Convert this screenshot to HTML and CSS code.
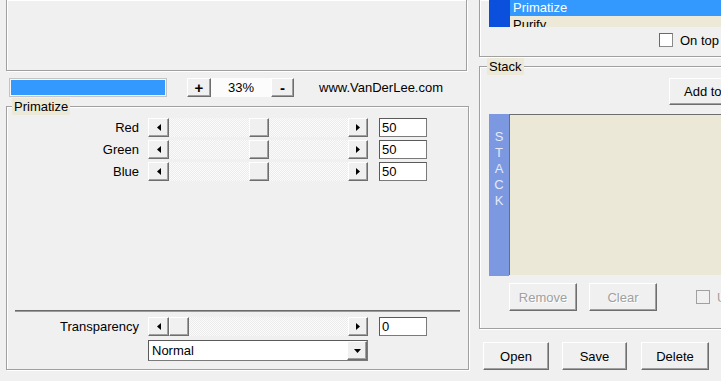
FILE: index.html
```html
<!DOCTYPE html>
<html>
  <head>
      <meta charset="utf-8">
      <title>Primatize</title>
      <link rel="stylesheet" href="styles.css">
  </head>
  <body>
      <div id="left">
          <div class="preview"></div>
          <div class="toolbar">
            <div class="progress"><div class="progress-fill"></div></div>
            <div class="btn zoom-btn plus">+</div>
            <div class="zoom-val">33%</div>
            <div class="btn zoom-btn">-</div>
            <div class="site">www.VanDerLee.com</div>
          </div>
          <fieldset class="group params">
            <legend>Primatize</legend>
            <div class="params-body">
              <div class="row">
                <div class="label">Red</div>
                <div class="slider">
                  <div class="btn arrow arrow-l"><svg width="4" height="7"><polygon points="4,0 4,7 0,3.5" fill="#000"/></svg></div>
                  <div class="track"><div class="btn thumb" style="margin-left:80px"></div></div>
                  <div class="btn arrow"><svg width="4" height="7"><polygon points="0,0 0,7 4,3.5" fill="#000"/></svg></div>
                </div>
                <div class="edit">50</div>
              </div>
              <div class="row">
                <div class="label">Green</div>
                <div class="slider">
                  <div class="btn arrow arrow-l"><svg width="4" height="7"><polygon points="4,0 4,7 0,3.5" fill="#000"/></svg></div>
                  <div class="track"><div class="btn thumb" style="margin-left:80px"></div></div>
                  <div class="btn arrow"><svg width="4" height="7"><polygon points="0,0 0,7 4,3.5" fill="#000"/></svg></div>
                </div>
                <div class="edit">50</div>
              </div>
              <div class="row">
                <div class="label">Blue</div>
                <div class="slider">
                  <div class="btn arrow arrow-l"><svg width="4" height="7"><polygon points="4,0 4,7 0,3.5" fill="#000"/></svg></div>
                  <div class="track"><div class="btn thumb" style="margin-left:80px"></div></div>
                  <div class="btn arrow"><svg width="4" height="7"><polygon points="0,0 0,7 4,3.5" fill="#000"/></svg></div>
                </div>
                <div class="edit">50</div>
              </div>

              <div class="separator"></div>

              <div class="row trans">
                <div class="label">Transparency</div>
                <div class="slider">
                  <div class="btn arrow arrow-l"><svg width="4" height="7"><polygon points="4,0 4,7 0,3.5" fill="#000"/></svg></div>
                  <div class="track"><div class="btn thumb" style="margin-left:0px"></div></div>
                  <div class="btn arrow"><svg width="4" height="7"><polygon points="0,0 0,7 4,3.5" fill="#000"/></svg></div>
                </div>
                <div class="edit">0</div>
              </div>
              <div class="row mode">
                <div class="label"></div>
                <div class="combo">
                  <div class="combo-text">Normal</div>
                  <div class="btn combo-btn"><svg width="7" height="4"><polygon points="0,0 7,0 3.5,4" fill="#000"/></svg></div>
                </div>
              </div>
            </div>
          </fieldset>
      </div>

      <div id="right">
          <div class="filters">
            <div class="list">
              <div class="list-strip"></div>
              <div class="list-items">
                <div class="item on">Primatize</div>
                <div class="item">Purify</div>
              </div>
            </div>
            <div class="check-row ontop"><span class="check"></span>On top</div>
          </div>

          <fieldset class="group stack">
            <legend>Stack</legend>
            <div class="btn add-btn">Add to stack</div>
            <div class="stack-box">
              <div class="stack-strip">S<br>T<br>A<br>C<br>K</div>
              <div class="stack-list"></div>
            </div>
            <div class="stack-actions">
              <div class="btn big-btn disabled remove">Remove</div>
              <div class="btn big-btn disabled clear">Clear</div>
              <div class="check-row disabled use"><span class="check"></span>Use</div>
            </div>
          </fieldset>

          <div class="bottom-btns">
            <div class="btn big-btn open">Open</div>
            <div class="btn big-btn save">Save</div>
            <div class="btn big-btn delete">Delete</div>
          </div>
      </div>
  </body>
</html>
```

FILE: styles.css
```css
*{
  margin:0;
  padding:0;
  box-sizing:border-box;
}
body{
  width:721px;
  height:381px;
  overflow:hidden;
  display:flex;
  background:#f0f0f0;
  font-family:"Liberation Sans", Arial, sans-serif;
  font-size:13px;
  color:#000;
}
#left{
  width:463px;
  margin-left:6px;
  flex-shrink:0;
}
#right{
  width:300px;
  margin-left:10px;
  flex-shrink:0;
}

/* etched frames */
.preview,
.filters,
.group{
  border:1px solid #a0a0a0;
  box-shadow:inset 1px 1px 0 #fff, 1px 1px 0 #fff;
}
.preview{
  width:461px;
  height:71px;
  border-top:none;
}

/* 3d buttons */
.btn{
  background:#f0f0f0;
  border:1px solid;
  border-color:#fff #6e6e6e #6e6e6e #fff;
  box-shadow:inset -1px -1px 0 #a0a0a0;
  display:flex;
  align-items:center;
  justify-content:center;
  flex-shrink:0;
}
.disabled{
  color:#a0a0a0;
  text-shadow:1px 1px 0 #fff;
}

.toolbar{
  display:flex;
  align-items:center;
  height:19px;
  margin-top:7px;
}
.progress{
  width:158px;
  height:19px;
  margin-left:3px;
  border:1px solid #c4c4c4;
  padding:1px;
  background:#f8f8f8;
}
.progress-fill{
  width:100%;
  height:100%;
  background:#3399ff;
}
.zoom-btn{
  width:23px;
  height:19px;
  font-weight:bold;
  font-size:15px;
  line-height:1;
}
.plus{
  width:24px;
  margin-left:20px;
}
.zoom-val{
  width:60px;
  height:19px;
  line-height:19px;
  text-align:center;
  background:#fcfcfc;
}
.site{
  margin-left:25px;
}

fieldset.group{
  margin-top:1px;
}
.group legend{
  background:#ece9d8;
  line-height:17px;
  padding:0 2px;
  margin-left:5px;
}
.params-body{
  height:254px;
  padding:3px 0 8px;
  display:flex;
  flex-direction:column;
}
.row{
  display:flex;
  align-items:center;
  height:19px;
  margin-bottom:3px;
}
.label{
  width:132px;
  margin-right:9px;
  text-align:right;
}
.slider{
  display:flex;
  width:220px;
  height:19px;
}
.arrow{
  width:20px;
  height:19px;
}
.arrow-l{
  width:21px;
}
.track{
  flex:1;
  display:flex;
  background:repeating-conic-gradient(#fbfbfb 0 25%, #ececec 0 50%) 0 0/2px 2px;
}
.thumb{
  width:20px;
  height:19px;
}
.edit{
  width:48px;
  height:19px;
  margin-left:11px;
  background:#fff;
  border:1px solid #7a7a7a;
  border-top-color:#5a5a5a;
  border-left-color:#5a5a5a;
  padding-left:2px;
  line-height:17px;
}
.separator{
  margin:auto 8px 5px;
  height:2px;
  border-top:1px solid #6a6a6a;
  border-bottom:1px solid #9a9a9a;
}
.trans{
  margin-bottom:4px;
}
.mode{
  height:21px;
  margin-bottom:0;
}
.combo{
  display:flex;
  width:220px;
  height:21px;
  background:#fff;
  border:1px solid #7a7a7a;
  border-top-color:#5a5a5a;
  border-left-color:#5a5a5a;
}
.combo-text{
  flex:1;
  padding-left:3px;
  line-height:19px;
}
.combo-btn{
  width:20px;
  height:19px;
}

/* right column */
.filters{
  border-top:none;
  border-right:none;
  padding:0 0 9px 9px;
}
.list{
  display:flex;
  height:27px;
  overflow:hidden;
  background:#ece9d8;
}
.list-strip{
  width:21px;
  background:#0a50dc;
}
.list-items{
  flex:1;
}
.item{
  height:17px;
  line-height:16px;
  padding-left:3px;
}
.item.on{
  background:#3399ff;
  color:#fff;
  height:16px;
  margin-bottom:1px;
}
.check-row{
  display:flex;
  align-items:center;
  height:14px;
}
.ontop{
  margin:6px 0 0 170px;
}
.check{
  width:14px;
  height:14px;
  margin-right:7px;
  background:#fff;
  border:1px solid #8a8a8a;
  border-top-color:#6a6a6a;
  border-left-color:#6a6a6a;
}
.disabled .check{
  background:#f0f0f0;
  border-color:#a0a0a0;
}

.stack{
  border-right:none;
  height:271px;
  padding-top:3px;
}
.stack legend{
  margin-left:7px;
}
.add-btn{
  width:100px;
  height:27px;
  margin-left:189px;
  justify-content:flex-start;
  padding-left:14px;
}
.stack-box{
  display:flex;
  height:162px;
  margin:9px 0 0 9px;
}
.stack-strip{
  width:20px;
  background:#7b98e0;
  color:#e4eaf9;
  text-align:center;
  line-height:16px;
  padding-top:15px;
}
.stack-list{
  flex:1;
  height:161px;
  background:#ece8d8;
  border-top:1px solid #6e6e6e;
  border-left:1px solid #6e6e6e;
}
.stack-actions{
  display:flex;
  align-items:center;
  height:28px;
  margin-top:7px;
  padding-left:29px;
}
.big-btn{
  height:28px;
}
.remove{
  width:68px;
}
.clear{
  width:68px;
  margin-left:12px;
}
.use{
  margin-left:39px;
}

.bottom-btns{
  display:flex;
  margin:13px 0 0 4px;
}
.open{
  width:66px;
}
.save{
  width:65px;
  margin-left:13px;
}
.delete{
  width:68px;
  margin-left:14px;
}
```
